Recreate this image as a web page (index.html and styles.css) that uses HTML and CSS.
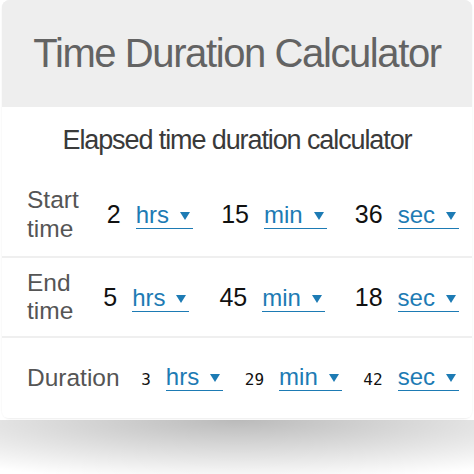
FILE: index.html
```html
<!DOCTYPE html>
<html lang="en">
  <head>
    <meta charset="UTF-8" />
    <meta name="viewport" content="width=device-width, initial-scale=1.0" />
    <title>Time Duration Calculator</title>
    <link rel="stylesheet" href="styles.css">
  </head>
  <body>
    <div class="calculator">
      <div class="calc-head">
        <h1>Time Duration Calculator</h1>
      </div>

      <div class="calc-block">
        <p class="subtitle">Elapsed time duration calculator</p>
        <div class="row row-start">
          <span class="label">Start<br />time</span>
          <span class="field"><span class="num">2</span><span class="unit">hrs<i class="caret"></i></span></span>
          <span class="field"><span class="num">15</span><span class="unit">min<i class="caret"></i></span></span>
          <span class="field"><span class="num">36</span><span class="unit">sec<i class="caret"></i></span></span>
        </div>
      </div>

      <div class="calc-block">
        <div class="row row-end">
          <span class="label">End<br />time</span>
          <span class="field"><span class="num">5</span><span class="unit">hrs<i class="caret"></i></span></span>
          <span class="field"><span class="num">45</span><span class="unit">min<i class="caret"></i></span></span>
          <span class="field"><span class="num">18</span><span class="unit">sec<i class="caret"></i></span></span>
        </div>
      </div>

      <div class="calc-block">
        <div class="row row-result">
          <span class="label">Duration</span>
          <span class="field"><span class="num small">3</span><span class="unit">hrs<i class="caret"></i></span></span>
          <span class="field"><span class="num small">29</span><span class="unit">min<i class="caret"></i></span></span>
          <span class="field"><span class="num small">42</span><span class="unit">sec<i class="caret"></i></span></span>
        </div>
      </div>
    </div>
    <div class="calc-shadow"></div>
  </body>
</html>
```

FILE: styles.css
```css
body {
  font-family: "Liberation Sans", Arial, sans-serif;
  margin: 0;
  background: #fff;
}

.calculator {
  margin: 0 2px;
  background: #efefef;
  border-radius: 8px;
  box-shadow: 0 1px 2px rgba(0, 0, 0, 0.08);
}

/* soft paper shadow under the card */
.calc-shadow {
  height: 56px;
  margin-top: 2px;
  background: radial-gradient(ellipse 85% 110% at 50% 0, rgba(0, 0, 0, 0.27), rgba(0, 0, 0, 0) 100%);
}

.calc-head {
  height: 107px;
  display: flex;
  align-items: center;
  justify-content: center;
  border-radius: 8px 8px 0 0;
  background: #eeeeee;
}

.calc-head h1 {
  margin: 0;
  font-size: 40px;
  font-weight: normal;
  letter-spacing: -1.4px;
  color: #636363;
}

.calc-block {
  background: #fff;
  margin-bottom: 2px;
}

.calc-block:last-child {
  margin-bottom: 0;
  border-radius: 0 0 6px 6px;
}

.subtitle {
  margin: 0;
  height: 66px;
  display: flex;
  align-items: center;
  justify-content: center;
  font-size: 27px;
  letter-spacing: -1.1px;
  color: #3a3a3a;
}

.row {
  display: flex;
  align-items: center;
  justify-content: space-between;
  padding: 0 13px 0 25px;
}

.row-start {
  height: 83px;
}

.row-end {
  height: 78px;
}

.row-result {
  height: 80px;
}

.label {
  font-size: 24.5px;
  line-height: 28.5px;
  color: #555;
}

.field {
  display: flex;
  align-items: baseline;
  gap: 15px;
}

.num {
  font-size: 25px;
  color: #111;
}

.num.small {
  font-family: "DejaVu Sans Mono", monospace;
  font-size: 16px;
}

.unit {
  font-size: 24px;
  color: #1d7bb4;
  border-bottom: 1.5px solid #1d7bb4;
  line-height: 1;
  padding-bottom: 1px;
}

.caret {
  display: inline-block;
  margin: 0 3px 3px 11px;
  border-left: 5px solid transparent;
  border-right: 5px solid transparent;
  border-top: 8px solid #1d7bb4;
}
```
